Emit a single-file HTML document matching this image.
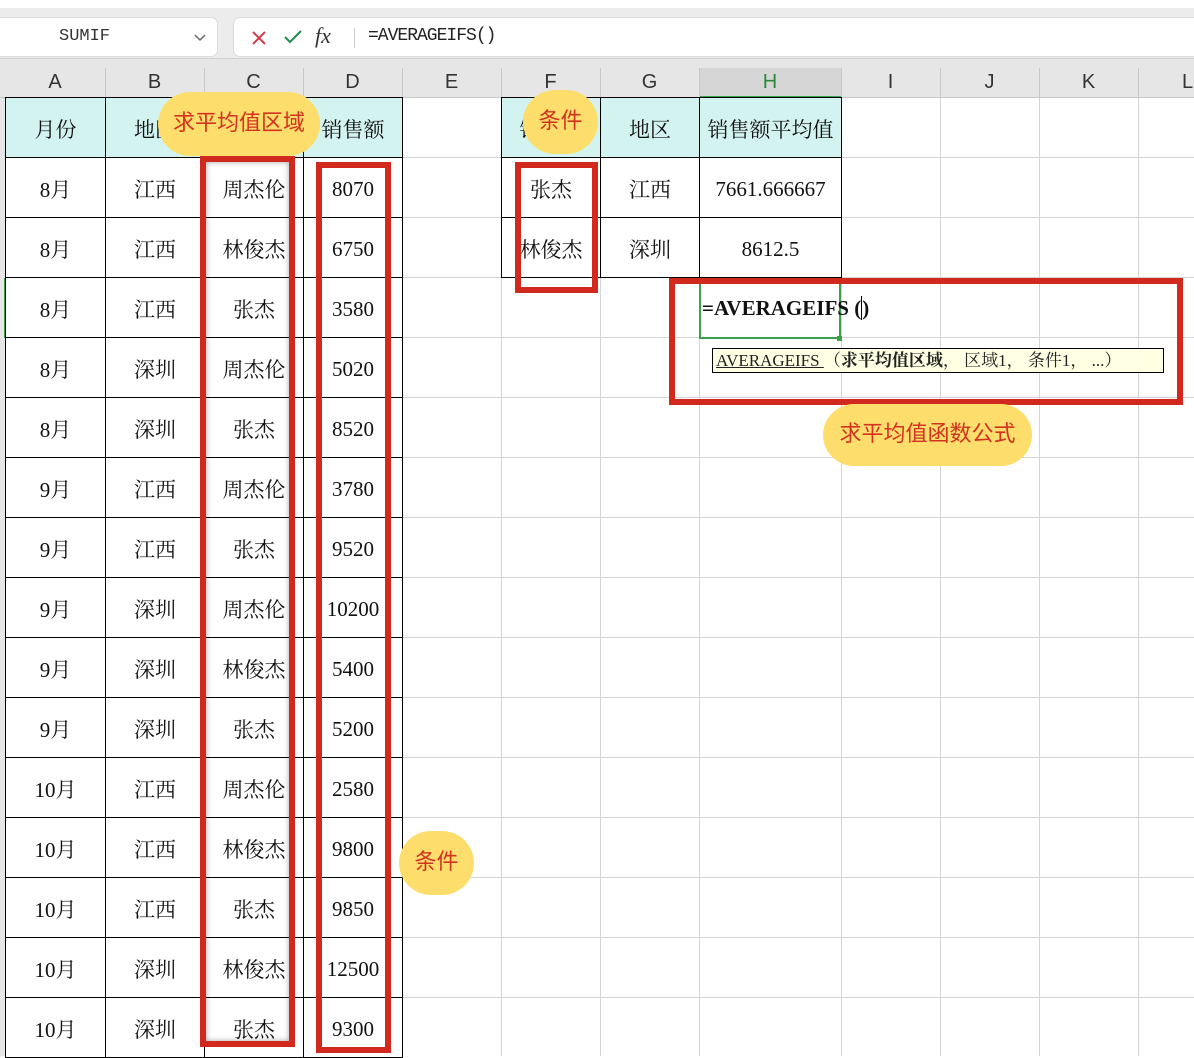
<!DOCTYPE html>
<html><head><meta charset="utf-8"><style>
*{margin:0;padding:0;box-sizing:border-box}
body{width:1194px;height:1056px;overflow:hidden;background:#fff;position:relative;font-family:"Liberation Serif","Noto Serif CJK SC",serif}
.abs{position:absolute}
.top{left:0;top:0;width:1194px;height:58px;background:#ececec;border-top:8px solid #fff}
.box{background:#fff;border:1px solid #dcdcdc;border-radius:7px;height:40px;top:17px}
.hdr{left:0;top:58px;width:1194px;height:40px;background:#e6e6e6;border-top:1px solid #d0d0d0;border-bottom:1px solid #c8c8c8}
.hl{position:absolute;top:68px;width:1px;height:30px;background:#c8c8c8}
.col{position:absolute;top:71px;font:20px "Liberation Sans",sans-serif;color:#333;text-align:center}
.grid{left:5px;top:98px;width:1189px;height:958px;
background-image:linear-gradient(#d4d4d4 1px,transparent 1px);background-size:100% 60px;background-position:0 59px}
.vl{position:absolute;top:98px;width:1px;height:958px;background:#d4d4d4}
table{position:absolute;border-collapse:collapse;table-layout:fixed}
td{border:1px solid #000;height:60px;text-align:center;font-size:21px;color:#111;padding:3px 0 0 0;white-space:nowrap;overflow:hidden;font-family:"Liberation Serif","Noto Serif CJK SC",serif}
tr.h td{background:#d3f3f1}
.red{position:absolute;border:6px solid #d2291f}
.pill{position:absolute;background:#fdde6c;border-radius:32px;color:#d2321f;font:22px "Liberation Sans","Noto Sans CJK SC",sans-serif;text-align:center}
</style></head><body>
<div class="abs top"></div>
<div class="abs box" style="left:-8px;width:226px"><span class="abs" style="left:66px;top:9px;font:17px 'Liberation Mono',monospace;color:#333">SUMIF</span>
<svg class="abs" style="left:200px;top:15px" width="14" height="10"><path d="M2 2l5 5 5-5" fill="none" stroke="#666" stroke-width="1.5"/></svg></div>
<div class="abs box" style="left:233px;width:980px">
<svg class="abs" style="left:17px;top:12px" width="16" height="16"><path d="M2 2l12 12M14 2L2 14" stroke="#d23a4a" stroke-width="2"/></svg>
<svg class="abs" style="left:49px;top:11px" width="20" height="16"><path d="M2 8l5 5 11-11" fill="none" stroke="#1e8a4c" stroke-width="2"/></svg>
<span class="abs" style="left:81px;top:5px;font:italic 22px 'Liberation Serif',serif;color:#333">fx</span>
<div class="abs" style="left:120px;top:10px;width:1px;height:20px;background:#ccc"></div>
<span class="abs" style="left:134px;top:8px;font:18px 'Liberation Mono',monospace;color:#222;letter-spacing:-1px">=AVERAGEIFS()</span>
</div>
<div class="abs hdr"></div>
<div class="abs" style="left:699px;top:68px;width:142px;height:30px;background:#d6d6d6;border-bottom:2px solid #3aa14a"></div>
<div class="hl" style="left:105px"></div><div class="hl" style="left:204px"></div><div class="hl" style="left:303px"></div><div class="hl" style="left:402px"></div><div class="hl" style="left:501px"></div><div class="hl" style="left:600px"></div><div class="hl" style="left:699px"></div><div class="hl" style="left:841px"></div><div class="hl" style="left:940px"></div><div class="hl" style="left:1039px"></div><div class="hl" style="left:1138px"></div>
<div class="col" style="left:5px;width:100px">A</div><div class="col" style="left:105px;width:99px">B</div><div class="col" style="left:204px;width:99px">C</div><div class="col" style="left:303px;width:99px">D</div><div class="col" style="left:402px;width:99px">E</div><div class="col" style="left:501px;width:99px">F</div><div class="col" style="left:600px;width:99px">G</div><div class="col" style="left:699px;width:142px;color:#2a8a3a">H</div><div class="col" style="left:841px;width:99px">I</div><div class="col" style="left:940px;width:99px">J</div><div class="col" style="left:1039px;width:99px">K</div><div class="col" style="left:1138px;width:99px;text-align:left;padding-left:44px">L</div>
<div class="abs" style="left:0;top:98px;width:5px;height:958px;background:#e6e6e6"></div>
<div class="abs grid"></div>
<div class="vl" style="left:501px"></div><div class="vl" style="left:600px"></div><div class="vl" style="left:699px"></div><div class="vl" style="left:841px"></div><div class="vl" style="left:940px"></div><div class="vl" style="left:1039px"></div><div class="vl" style="left:1138px"></div>
<div class="abs" style="left:4px;top:278px;width:2px;height:60px;background:#3aa14a"></div>

<table style="left:5px;top:97px;width:397px">
<colgroup><col style="width:100px"><col style="width:99px"><col style="width:99px"><col style="width:99px"></colgroup>
<tr class="h"><td>月份</td><td>地区</td><td>姓名</td><td>销售额</td></tr>
<tr><td>8月</td><td>江西</td><td>周杰伦</td><td>8070</td></tr>
<tr><td>8月</td><td>江西</td><td>林俊杰</td><td>6750</td></tr>
<tr><td>8月</td><td>江西</td><td>张杰</td><td>3580</td></tr>
<tr><td>8月</td><td>深圳</td><td>周杰伦</td><td>5020</td></tr>
<tr><td>8月</td><td>深圳</td><td>张杰</td><td>8520</td></tr>
<tr><td>9月</td><td>江西</td><td>周杰伦</td><td>3780</td></tr>
<tr><td>9月</td><td>江西</td><td>张杰</td><td>9520</td></tr>
<tr><td>9月</td><td>深圳</td><td>周杰伦</td><td>10200</td></tr>
<tr><td>9月</td><td>深圳</td><td>林俊杰</td><td>5400</td></tr>
<tr><td>9月</td><td>深圳</td><td>张杰</td><td>5200</td></tr>
<tr><td>10月</td><td>江西</td><td>周杰伦</td><td>2580</td></tr>
<tr><td>10月</td><td>江西</td><td>林俊杰</td><td>9800</td></tr>
<tr><td>10月</td><td>江西</td><td>张杰</td><td>9850</td></tr>
<tr><td>10月</td><td>深圳</td><td>林俊杰</td><td>12500</td></tr>
<tr><td>10月</td><td>深圳</td><td>张杰</td><td>9300</td></tr>
</table>

<table style="left:501px;top:97px;width:340px">
<colgroup><col style="width:99px"><col style="width:99px"><col style="width:142px"></colgroup>
<tr class="h"><td>销售员</td><td>地区</td><td>销售额平均值</td></tr>
<tr><td>张杰</td><td>江西</td><td>7661.666667</td></tr>
<tr><td>林俊杰</td><td>深圳</td><td>8612.5</td></tr>
</table>

<div class="abs" style="left:699px;top:278px;width:142px;height:61px;border:2px solid #3aa14a;border-top:none"></div>
<div class="abs" style="left:837px;top:336px;width:5px;height:5px;background:#3aa14a"></div>
<div class="abs" style="left:702px;top:296px;font:bold 21px 'Liberation Serif',serif;color:#111">=AVERAGEIFS (<span style="border-left:1px solid #000"></span>)</div>
<div class="abs" style="left:712px;top:348px;width:452px;height:25px;background:#ffffe4;border:1px solid #000;font:17px 'Liberation Serif','Noto Serif CJK SC',serif;line-height:23px;padding-left:3px;white-space:nowrap;color:#222"><u>AVERAGEIFS </u>（<b>求平均值区域</b>， 区域1， 条件1， ...）</div>

<div class="red" style="left:200px;top:156px;width:95px;height:891px;box-shadow:inset 0 0 6px rgba(0,0,0,.35)"></div>
<div class="red" style="left:316px;top:162px;width:75px;height:891px"></div>
<div class="red" style="left:515px;top:162px;width:83px;height:131px"></div>
<div class="red" style="left:669px;top:278px;width:514px;height:127px"></div>

<div class="pill" style="left:158px;top:92px;width:162px;height:64px;line-height:62px">求平均值区域</div>
<div class="pill" style="left:523px;top:90px;width:75px;height:64px;line-height:62px">条件</div>
<div class="pill" style="left:399px;top:831px;width:75px;height:64px;line-height:62px">条件</div>
<div class="pill" style="left:823px;top:404px;width:209px;height:62px;line-height:60px">求平均值函数公式</div>
</body></html>
